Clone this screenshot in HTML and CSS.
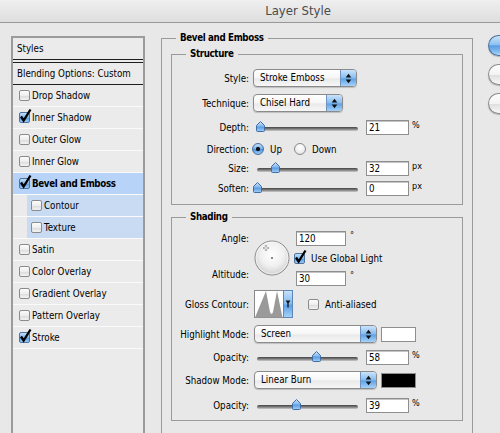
FILE: index.html
```html
<!DOCTYPE html>
<html>
<head>
<meta charset="utf-8">
<title>Layer Style</title>
<link rel="stylesheet" href="styles.css">
</head>
<body>
<svg class="defs" width="0" height="0" aria-hidden="true">
  <defs>
    <linearGradient id="gThumb" x1="0" y1="0" x2="0" y2="1">
      <stop offset="0" stop-color="#d3e7fc"/>
      <stop offset=".45" stop-color="#86b9ee"/>
      <stop offset=".55" stop-color="#5d9be2"/>
      <stop offset="1" stop-color="#a4d0f7"/>
    </linearGradient>
    <linearGradient id="gBlue" x1="0" y1="0" x2="0" y2="1">
      <stop offset="0" stop-color="#c9e2fb"/>
      <stop offset=".5" stop-color="#7fb8ee"/>
      <stop offset=".55" stop-color="#5b9fe6"/>
      <stop offset="1" stop-color="#a8d3f8"/>
    </linearGradient>
    <radialGradient id="gDial" cx=".5" cy=".4" r=".62">
      <stop offset="0" stop-color="#ffffff"/>
      <stop offset=".55" stop-color="#f0f0f0"/>
      <stop offset="1" stop-color="#cdcdcd"/>
    </radialGradient>
  </defs>
</svg>
<div class="window">
  <div class="titlebar">Layer Style</div>
  <div class="main">
    <div class="styles">
      <div class="sp-head">Styles</div>
      <div class="sp-blend">Blending Options: Custom</div>
      <div class="item"><span class="cb"></span>Drop Shadow</div>
      <div class="item"><span class="cb on"><svg class="tick" viewBox="0 0 14 14"><path d="M3 7.5 L5.6 11.5 L12.5 0.5"/></svg></span>Inner Shadow</div>
      <div class="item"><span class="cb"></span>Outer Glow</div>
      <div class="item"><span class="cb"></span>Inner Glow</div>
      <div class="item sel"><span class="cb on"><svg class="tick" viewBox="0 0 14 14"><path d="M3 7.5 L5.6 11.5 L12.5 0.5"/></svg></span>Bevel and Emboss</div>
      <div class="item sub"><span class="cb"></span>Contour</div>
      <div class="item sub"><span class="cb"></span>Texture</div>
      <div class="item"><span class="cb"></span>Satin</div>
      <div class="item"><span class="cb"></span>Color Overlay</div>
      <div class="item"><span class="cb"></span>Gradient Overlay</div>
      <div class="item"><span class="cb"></span>Pattern Overlay</div>
      <div class="item"><span class="cb on"><svg class="tick" viewBox="0 0 14 14"><path d="M3 7.5 L5.6 11.5 L12.5 0.5"/></svg></span>Stroke</div>
    </div>

    <fieldset class="group bevel">
      <legend>Bevel and Emboss</legend>

      <fieldset class="group sub-group structure">
        <legend>Structure</legend>
        <div class="row r-style">
          <span class="lbl">Style:</span>
          <div class="select w-style"><span class="sel-text">Stroke Emboss</span><span class="sel-btn"><svg width="7" height="11" viewBox="0 0 7 11"><path d="M3.5 0.8 L6.3 4.6 H0.7Z M0.7 6.4 H6.3 L3.5 10.2Z"/></svg></span></div>
        </div>
        <div class="row r-tech">
          <span class="lbl">Technique:</span>
          <div class="select w-tech"><span class="sel-text">Chisel Hard</span><span class="sel-btn"><svg width="7" height="11" viewBox="0 0 7 11"><path d="M3.5 0.8 L6.3 4.6 H0.7Z M0.7 6.4 H6.3 L3.5 10.2Z"/></svg></span></div>
        </div>
        <div class="row r-depth">
          <span class="lbl">Depth:</span>
          <div class="slider"><div class="track"></div><svg class="thumb" style="left:3px" viewBox="0 0 9 11"><path d="M4.5 0.5 L8.5 4.5 V9.5 Q8.5 10.5 7.5 10.5 H1.5 Q0.5 10.5 0.5 9.5 V4.5 Z"/></svg></div>
          <div class="num">21</div><span class="unit">%</span>
        </div>
        <div class="row r-dir">
          <span class="lbl">Direction:</span>
          <span class="radio on"></span><span class="rtext">Up</span>
          <span class="radio down"></span><span class="rtext">Down</span>
        </div>
        <div class="row r-size">
          <span class="lbl">Size:</span>
          <div class="slider"><div class="track"></div><svg class="thumb" style="left:18px" viewBox="0 0 9 11"><path d="M4.5 0.5 L8.5 4.5 V9.5 Q8.5 10.5 7.5 10.5 H1.5 Q0.5 10.5 0.5 9.5 V4.5 Z"/></svg></div>
          <div class="num">32</div><span class="unit">px</span>
        </div>
        <div class="row r-soften">
          <span class="lbl">Soften:</span>
          <div class="slider"><div class="track"></div><svg class="thumb" style="left:0px" viewBox="0 0 9 11"><path d="M4.5 0.5 L8.5 4.5 V9.5 Q8.5 10.5 7.5 10.5 H1.5 Q0.5 10.5 0.5 9.5 V4.5 Z"/></svg></div>
          <div class="num">0</div><span class="unit">px</span>
        </div>
      </fieldset>

      <fieldset class="group sub-group shading">
        <legend>Shading</legend>
        <div class="angle">
          <span class="lbl lbl-a">Angle:</span>
          <svg class="dial" width="36" height="36" viewBox="0 0 36 36">
            <circle cx="18" cy="18" r="17" fill="url(#gDial)" stroke="#8a8a8a"/>
            <circle cx="18" cy="18" r="16" fill="none" stroke="#ffffff" stroke-opacity=".6"/>
            <path d="M12 5.2 V10.8 M9.2 8 H14.8" stroke="#8a8a8a" stroke-width="2.2"/>
            <path d="M12 5.6 V10.4 M9.6 8 H14.4" stroke="#ffffff" stroke-width="0.9"/>
            <rect x="17" y="17" width="2" height="2" fill="#8a8a8a"/>
          </svg>
          <div class="a-field a-top"><div class="num wide">120</div><span class="unit deg">°</span></div>
          <div class="glob"><span class="cb on"><svg class="tick" viewBox="0 0 14 14"><path d="M3 7.5 L5.6 11.5 L12.5 0.5"/></svg></span><span class="gtext">Use Global Light</span></div>
          <span class="lbl lbl-b">Altitude:</span>
          <div class="a-field a-bot"><div class="num wide">30</div><span class="unit deg">°</span></div>
        </div>
        <div class="row r-gloss">
          <span class="lbl">Gloss Contour:</span>
          <svg class="contour" width="39" height="28" viewBox="0 0 39 28">
            <rect x="0.5" y="0.5" width="38" height="27" fill="#ffffff" stroke="#8a8a8a"/>
            <path d="M1 27.5 L12 1 L16 22 Q17.5 26 19 22 L23 1 L28.5 27.5Z" fill="#9a9a9a"/>
            <rect x="29.5" y="0.5" width="9" height="27" fill="url(#gBlue)" stroke="#5d86b9"/>
            <path d="M31.6 10.5 H36.4 L34 14.2Z" fill="#111"/>
            <path d="M34 13.5 V17.5" stroke="#111" stroke-width="1.3"/>
          </svg>
          <span class="cb aa"></span><span class="gtext">Anti-aliased</span>
        </div>
        <div class="row r-hl">
          <span class="lbl">Highlight Mode:</span>
          <div class="select w-mode"><span class="sel-text">Screen</span><span class="sel-btn"><svg width="7" height="11" viewBox="0 0 7 11"><path d="M3.5 0.8 L6.3 4.6 H0.7Z M0.7 6.4 H6.3 L3.5 10.2Z"/></svg></span></div>
          <span class="swatch"></span>
        </div>
        <div class="row r-op1">
          <span class="lbl">Opacity:</span>
          <div class="slider"><div class="track"></div><svg class="thumb" style="left:59px" viewBox="0 0 9 11"><path d="M4.5 0.5 L8.5 4.5 V9.5 Q8.5 10.5 7.5 10.5 H1.5 Q0.5 10.5 0.5 9.5 V4.5 Z"/></svg></div>
          <div class="num">58</div><span class="unit">%</span>
        </div>
        <div class="row r-sh">
          <span class="lbl">Shadow Mode:</span>
          <div class="select w-mode"><span class="sel-text">Linear Burn</span><span class="sel-btn"><svg width="7" height="11" viewBox="0 0 7 11"><path d="M3.5 0.8 L6.3 4.6 H0.7Z M0.7 6.4 H6.3 L3.5 10.2Z"/></svg></span></div>
          <span class="swatch black"></span>
        </div>
        <div class="row r-op2">
          <span class="lbl">Opacity:</span>
          <div class="slider"><div class="track"></div><svg class="thumb" style="left:39px" viewBox="0 0 9 11"><path d="M4.5 0.5 L8.5 4.5 V9.5 Q8.5 10.5 7.5 10.5 H1.5 Q0.5 10.5 0.5 9.5 V4.5 Z"/></svg></div>
          <div class="num">39</div><span class="unit">%</span>
        </div>
      </fieldset>
    </fieldset>

    <div class="buttons">
      <div class="btn default" role="button" aria-label="OK"></div>
      <div class="btn" role="button" aria-label="Cancel"></div>
      <div class="btn" role="button" aria-label="New Style"></div>
    </div>
  </div>
</div>
</body>
</html>
```

FILE: styles.css
```css
* { box-sizing: border-box; }
html, body { margin: 0; padding: 0; }
body {
  width: 500px;
  height: 433px;
  overflow: hidden;
  position: relative;
  background: #e8e8e8;
  font-family: "DejaVu Sans Condensed", "DejaVu Sans", sans-serif;
  font-size: 9.7px;
  color: #000;
}
.defs { position: absolute; width: 0; height: 0; overflow: hidden; }

.window { width: 500px; overflow: hidden; }
.titlebar {
  height: 23px;
  line-height: 22px;
  padding-left: 96px;
  text-align: center;
  font-size: 13px;
  color: #4b4b4b;
  background: linear-gradient(#efefef, #dedede);
  border-bottom: 1px solid #999;
}
.main { display: flex; align-items: flex-start; height: 410px; }

/* ---- styles list ---- */
.styles {
  flex: none;
  width: 134px;
  height: 397px;
  margin: 13px 0 0 11px;
  border: 2px solid #9b9b9b;
  border-bottom: none;
  background: #ebebeb;
}
.sp-head {
  height: 22px;
  line-height: 21px;
  padding-left: 4px;
  border-bottom: 1px solid #1e1e1e;
  margin-bottom: 2px;
}
.sp-blend {
  height: 23px;
  line-height: 21px;
  padding-left: 4px;
  border-top: 1px solid #1e1e1e;
  border-bottom: 1px solid #1e1e1e;
}
.item {
  height: 22px;
  display: flex;
  align-items: center;
  padding-left: 6px;
  border-bottom: 1px solid #fafafa;
  white-space: nowrap;
}
.item .cb { margin-right: 2px; }
.item.sub {
  padding-left: 18px;
  background: linear-gradient(to right, transparent 14px, #c9dbf3 14px);
}
.item.sel {
  background: #b7d3f8;
  font-weight: bold;
  letter-spacing: -0.35px;
}

/* checkbox */
.cb {
  flex: none;
  position: relative;
  width: 11px;
  height: 11px;
  border: 1px solid #8b8b8b;
  border-radius: 2px;
  background: linear-gradient(#fdfdfd, #ececec 55%, #dedede 60%, #f3f3f3);
}
.cb.on {
  border-color: #4f73a0;
  background: linear-gradient(#c3dffb, #7fb6ec 50%, #5a9be2 55%, #9ccaf6);
}
.tick {
  position: absolute;
  left: -2px;
  top: -4px;
  width: 14px;
  height: 14px;
  overflow: visible;
}
.tick path {
  fill: none;
  stroke: #000;
  stroke-width: 2.3;
  stroke-linejoin: miter;
}

/* ---- group boxes ---- */
.group {
  margin: 0;
  border: 1px solid #9a9a9a;
  min-width: 0;
}
.group > legend {
  padding: 0 4px;
  font-weight: bold;
  font-size: 9.7px;
  line-height: 14px;
  letter-spacing: -0.35px;
}
.bevel {
  flex: none;
  width: 312px;
  height: 402px;
  margin: 8px 0 0 16px;
  padding: 2px 9px 0;
  border-bottom: none;
}
.bevel > legend { margin-left: 5px; }
.sub-group { width: 292px; padding: 0; }
.sub-group > legend { margin-left: 14px; }
.structure { padding: 0 0 7px; }
.shading { margin-top: 5px; padding: 4px 0 6px; }

/* ---- rows ---- */
.row {
  display: flex;
  align-items: center;
  height: 18px;
  white-space: nowrap;
}
.lbl {
  flex: none;
  width: 77px;
  text-align: right;
  white-space: nowrap;
}
.r-style { margin-top: 8px; }
.r-tech { margin-top: 7px; }
.r-depth { margin-top: 6px; }
.r-dir { margin-top: 4px; }
.r-size { margin-top: 1px; }
.r-soften { margin-top: 2px; }
.r-gloss { height: 28px; margin-top: 2px; }
.r-hl { margin-top: 7px; }
.r-op1 { margin-top: 5px; }
.r-sh { margin-top: 5px; }
.r-op2 { margin-top: 7px; }

/* popup */
.select {
  flex: none;
  display: flex;
  height: 18px;
  margin-left: 4px;
  border: 1px solid #8a8a8a;
  border-radius: 4px;
  overflow: hidden;
  background: linear-gradient(#ffffff, #f6f6f6 50%, #e9e9e9 55%, #f7f7f7);
  box-shadow: 0 1px 1px rgba(0, 0, 0, 0.18);
}
.w-style { width: 104px; }
.w-tech { width: 90px; }
.w-mode { width: 123px; margin-left: 5px; }
.sel-text {
  flex: 1;
  padding-left: 6px;
  line-height: 16px;
}
.sel-btn {
  flex: none;
  width: 16px;
  display: flex;
  align-items: center;
  justify-content: center;
  border-left: 1px solid #6f93c0;
  background: linear-gradient(#cbe3fb, #86bcef 50%, #5ea1e6 55%, #a6d2f8);
}
.sel-btn path { fill: #111; }

/* slider */
.slider {
  flex: none;
  position: relative;
  width: 105px;
  height: 18px;
  margin-left: 4px;
}
.track {
  margin: 9px 0 0 4px;
  height: 4px;
  border-radius: 2px;
  background: linear-gradient(#444444, #7d7d7d 50%, #cccccc);
}
.thumb {
  position: absolute;
  top: 3px;
  width: 9px;
  height: 11px;
}
.thumb path { fill: url(#gThumb); stroke: #3f6ea6; }

/* number field */
.num {
  flex: none;
  width: 43px;
  height: 15px;
  margin-left: 8px;
  padding: 0 2px;
  line-height: 13px;
  border: 1px solid #8e8e8e;
  background: #fff;
  box-shadow: inset 0 1px 0 #c4c4c4;
}
.num.wide { width: 50px; margin-left: 2px; }
.unit {
  margin-left: 3px;
  margin-bottom: 5px;
  font-size: 9px;
}
.unit.deg { margin-left: 4px; margin-bottom: 6px; }

/* radios */
.radio {
  flex: none;
  width: 12px;
  height: 12px;
  margin-left: 3px;
  border-radius: 50%;
  border: 1px solid #8a8a8a;
  background: radial-gradient(circle at 50% 35%, #ffffff, #f1f1f1 50%, #d6d6d6);
}
.radio.on {
  border-color: #4d6f98;
  background: radial-gradient(circle, #111 0 1.8px, transparent 2.4px),
              linear-gradient(#c3dffb, #74afea 50%, #4f93e0 55%, #9ccbf6);
}
.radio.down { margin-left: 12px; }
.rtext { margin-left: 6px; }

/* angle block */
.angle {
  display: grid;
  grid-template-columns: 77px 45px 1fr;
  grid-template-rows: 20px 20px 20px;
  align-items: center;
}
.lbl-a { grid-column: 1; grid-row: 1; }
.lbl-b { grid-column: 1; grid-row: 3; align-self: start; line-height: 14px; }
.dial { grid-column: 2; grid-row: 1 / 4; justify-self: center; }
.a-field { grid-column: 3; display: flex; align-items: center; }
.a-top { grid-row: 1; }
.a-bot { grid-row: 3; }
.glob { grid-column: 3; grid-row: 2; display: flex; align-items: center; }
.gtext { margin-left: 6px; }

.contour { flex: none; margin-left: 5px; }
.cb.aa { margin-left: 15px; }

.swatch {
  flex: none;
  width: 35px;
  height: 15px;
  margin-left: 4px;
  border: 1px solid #8e8e8e;
  background: #fff;
}
.swatch.black { background: #000; }

/* right buttons (cut off by the window edge) */
.buttons {
  flex: none;
  display: flex;
  flex-direction: column;
  gap: 8px;
  margin: 12px 0 0 15px;
}
.btn {
  width: 12px;
  height: 21px;
  border-radius: 11px 0 0 11px;
  border: 1px solid #8a8a8a;
  border-right: none;
  background: linear-gradient(#fefefe, #f3f3f3 50%, #e0e0e0 55%, #f8f8f8);
  box-shadow: 0 1px 1px rgba(0, 0, 0, 0.25);
}
.btn.default {
  border-color: #4b6f9f;
  background: linear-gradient(#cbe4fc, #8cc1f2 45%, #5a9ce5 52%, #86bff2 85%, #b8dcfa);
}
```
